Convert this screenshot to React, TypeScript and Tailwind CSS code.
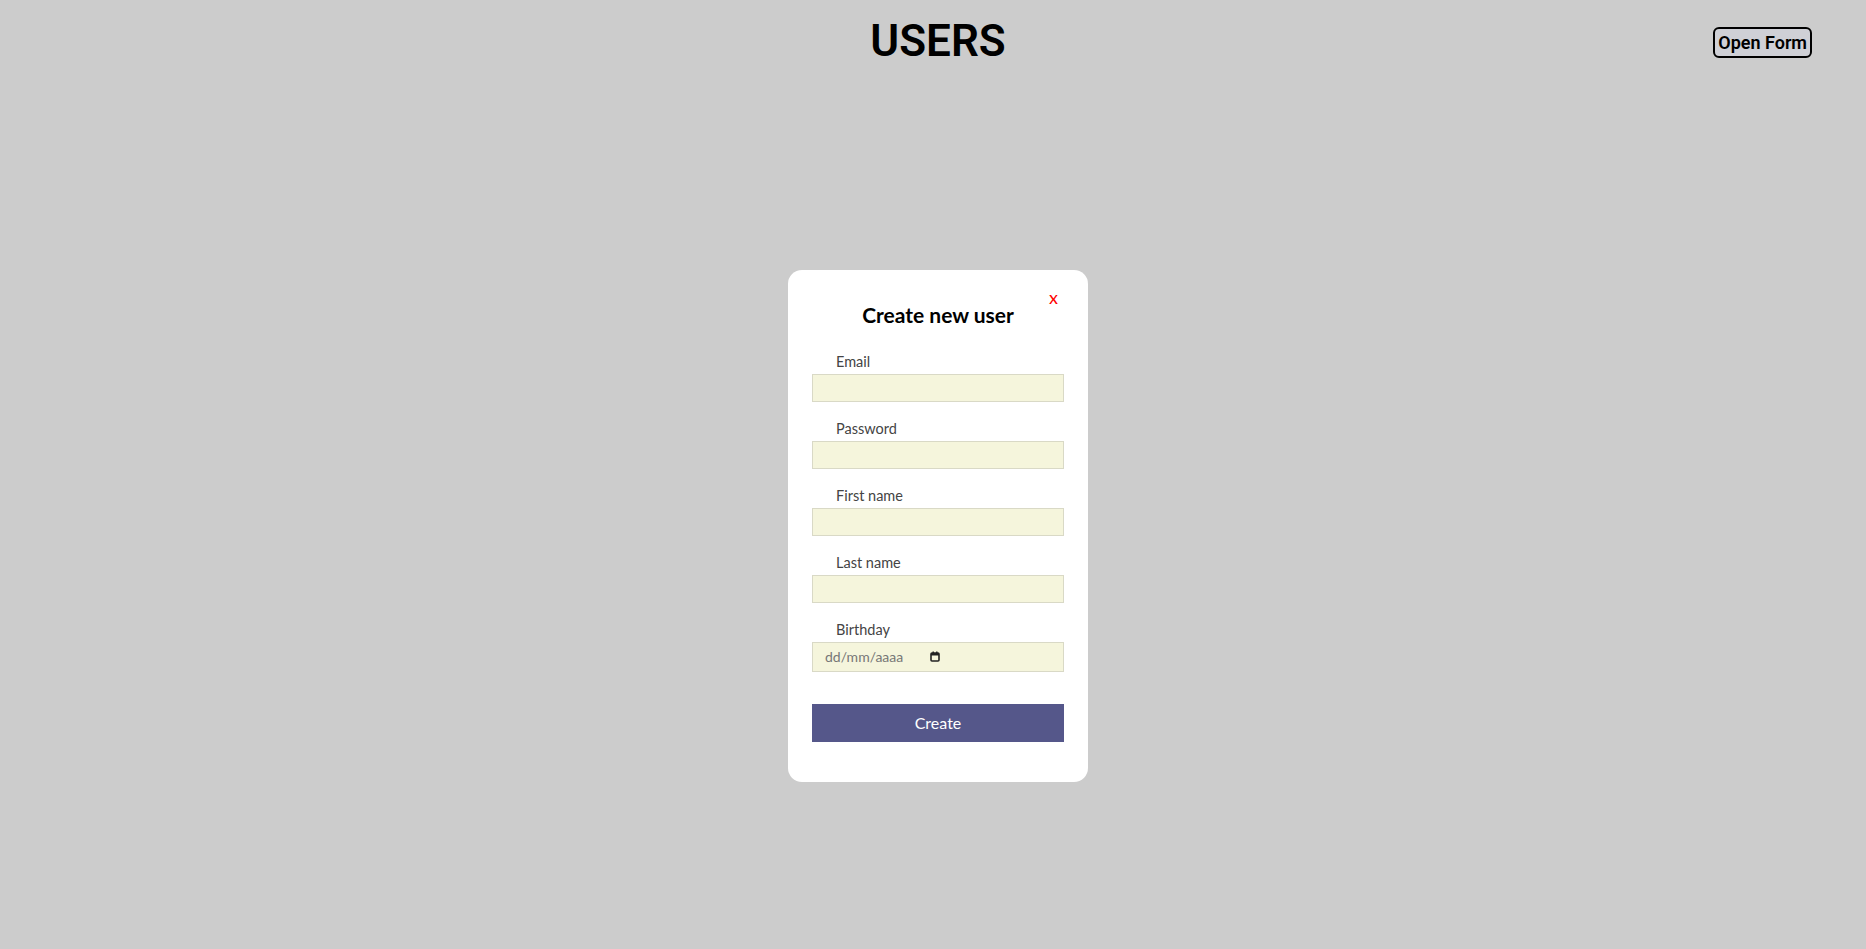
const fields = [
  { id: "email", label: "Email", type: "email" },
  { id: "password", label: "Password", type: "password" },
  { id: "firstName", label: "First name", type: "text" },
  { id: "lastName", label: "Last name", type: "text" },
];

const CalendarIcon = () => (
  <svg width="10" height="11" viewBox="0 0 10 11" className="block">
    <rect x="1" y="2" width="8" height="8" rx="1" fill="none" stroke="#222" strokeWidth="1.6" />
    <rect x="1" y="2" width="8" height="2.5" fill="#222" />
    <rect x="2.5" y="0.5" width="1.4" height="2" fill="#222" />
    <rect x="6.1" y="0.5" width="1.4" height="2" fill="#222" />
  </svg>
);

const App = () => {
  return (
    <div className="min-h-screen flex flex-col bg-[#cccccc] font-['Roboto',sans-serif]">
      <header className="grid grid-cols-[1fr_auto_1fr] h-[102px] pl-[10px]">
        <div />
        <h1 className="mt-[19px] text-[44px] leading-[44px] font-semibold text-black">USERS</h1>
        <div className="flex justify-end items-start pr-[54px]">
          <button className="mt-[27px] px-[3px] border-2 border-black rounded-[6px] bg-[#cfd0d6] text-[18px] leading-[27px] font-semibold text-black">
            Open Form
          </button>
        </div>
      </header>

      <main className="flex-1 flex justify-center items-center pl-[10px] font-['Lato',sans-serif]">
        <div className="relative w-[300px] bg-white rounded-[14px] px-[24px] pt-[31px] pb-[40px]">
          <button className="absolute top-[17px] right-[30px] text-[18px] leading-[20px] text-[#ff0000]">
            x
          </button>
          <h2 className="text-center text-[21px] leading-[28px] font-bold text-black">Create new user</h2>

          <form className="mt-[23px] flex flex-col gap-[17px]">
            {fields.map((f) => (
              <div key={f.id} className="flex flex-col gap-[2px]">
                <label htmlFor={f.id} className="pl-[24px] text-[14.5px] leading-[20px] text-[#444]">
                  {f.label}
                </label>
                <input
                  id={f.id}
                  type={f.type}
                  className="h-[28px] w-full bg-[#f5f5dc] border border-[#d9d9c6] px-2 text-[14px] outline-none"
                />
              </div>
            ))}
            <div className="flex flex-col gap-[2px]">
              <label className="pl-[24px] text-[14.5px] leading-[20px] text-[#444]">Birthday</label>
              <div className="h-[30px] w-full bg-[#f5f5dc] border border-[#d9d9c6] flex items-center pl-[12px]">
                <span className="text-[14px] text-[#777] w-[105px]">dd/mm/aaaa</span>
                <CalendarIcon />
              </div>
            </div>
            <button
              type="button"
              className="mt-[15px] h-[38px] w-full bg-[#55578a] text-white text-[16px]"
            >
              Create
            </button>
          </form>
        </div>
      </main>
    </div>
  );
};

export default App;
